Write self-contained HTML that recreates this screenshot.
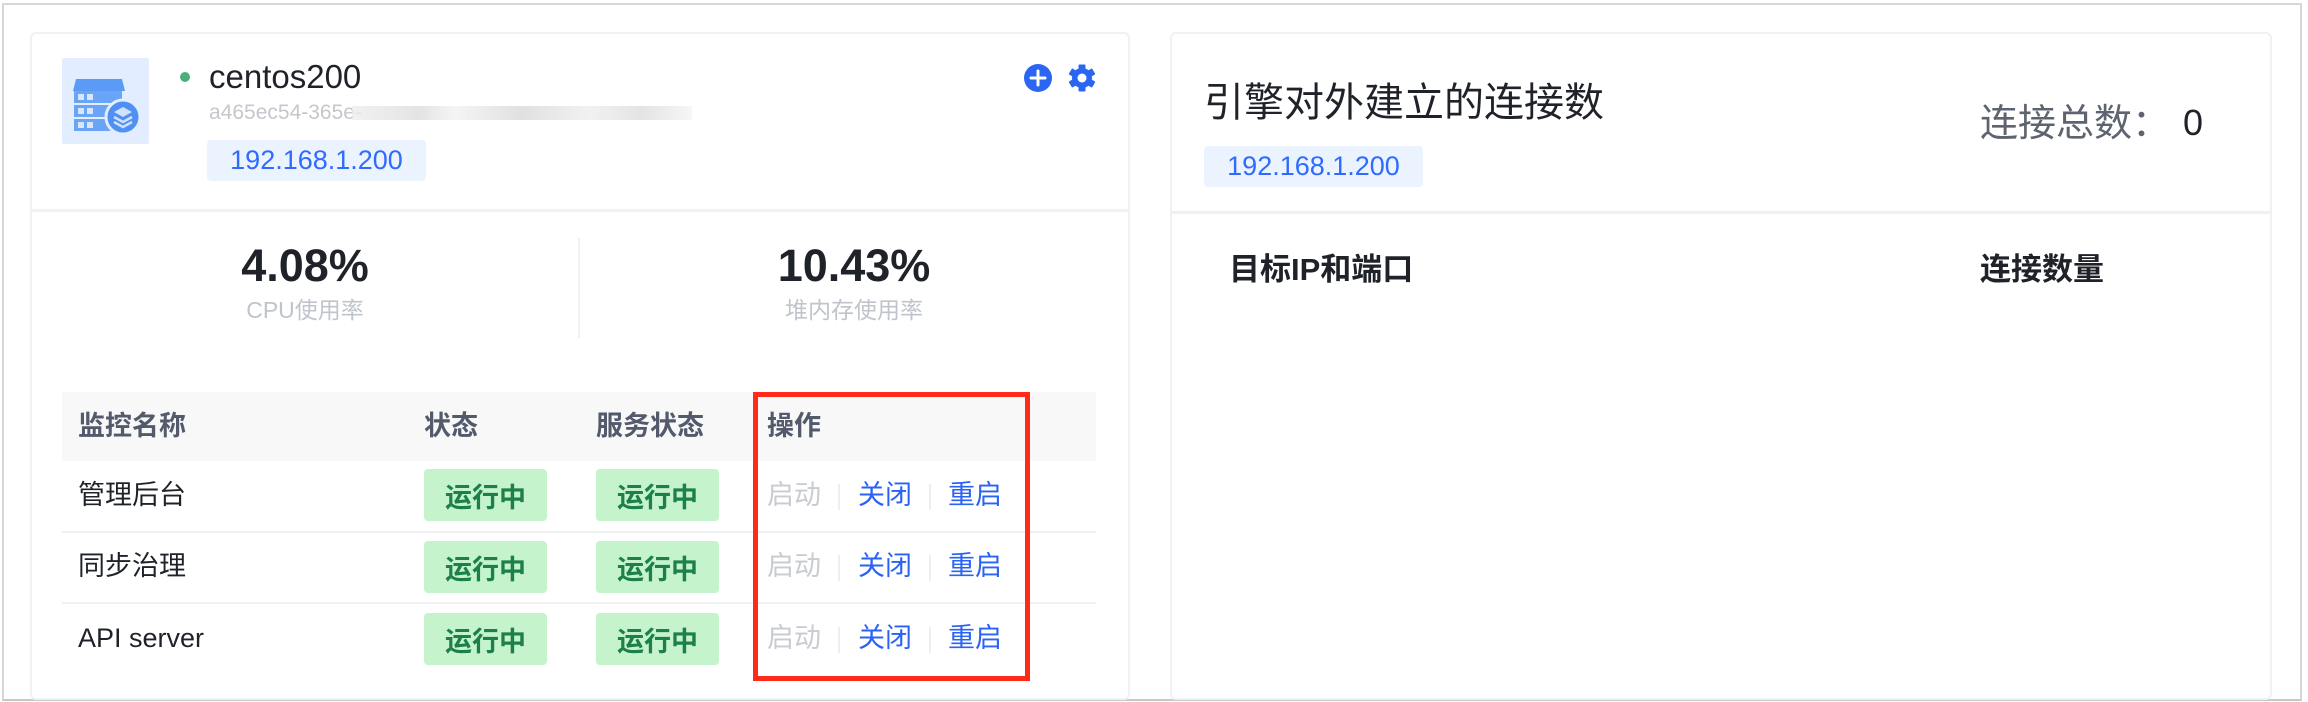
<!DOCTYPE html>
<html><head><meta charset="utf-8"><style>
*{box-sizing:border-box;margin:0;padding:0}
body{width:2308px;height:702px;background:#fff;position:relative;overflow:hidden;font-family:"Liberation Sans","Noto Sans CJK SC",sans-serif;}
.frame{position:absolute;left:2px;top:3px;width:2300px;height:698px;border:2px solid #d6d6d6;border-bottom-color:#c8c8c8;}
.card{position:absolute;border:2px solid #f0f1f3;border-radius:6px;background:#fff}
.abs{position:absolute;white-space:nowrap;line-height:1}
.tag{position:absolute;background:#ebf3ff;color:#2f6bff;border-radius:4px;font-size:27px;display:flex;align-items:center;justify-content:center}
.hdr{color:#525a6b;font-size:27px;font-weight:bold}
.badge{position:absolute;width:123px;height:52px;background:#c4f3cc;border-radius:4px;color:#1d8048;font-size:27px;font-weight:bold;display:flex;align-items:center;justify-content:center}
.op{font-size:27px}
.row{font-size:27px;color:#1f2329}
.sep{position:absolute;width:2px;height:26px;background:#eceef1}
</style></head><body>
<div class="frame"></div>
<div class="card" style="left:30px;top:32px;width:1100px;height:668px"></div>
<div class="abs" style="left:32px;top:209px;width:1096px;height:3px;background:#f0f1f3"></div>
<!-- server icon -->
<div class="abs" style="left:62px;top:58px;width:87px;height:86px;background:#e2eeff;border-radius:2px"></div>
<svg class="abs" style="left:62px;top:58px" width="87" height="86" viewBox="0 0 87 86">
<path d="M14 21h46l3 12H11z" fill="#5b9bf5"/>
<rect x="12" y="33" width="48" height="12" fill="#6aa4f7"/>
<rect x="12" y="47" width="48" height="12" fill="#6aa4f7"/>
<rect x="12" y="61" width="48" height="12" fill="#6aa4f7"/>
<g fill="#d8e6fb"><rect x="16" y="36" width="6" height="6"/><rect x="25" y="36" width="6" height="6"/><rect x="16" y="50" width="6" height="6"/><rect x="25" y="50" width="6" height="6"/><rect x="16" y="64" width="6" height="6"/><rect x="25" y="64" width="6" height="6"/></g>
<circle cx="61" cy="59" r="17" fill="#4f90f2" stroke="#e2eeff" stroke-width="3"/>
<path d="M61 49l9 5-9 5-9-5z" fill="#cfe1fb"/><path d="M52 59l9 5 9-5" stroke="#cfe1fb" stroke-width="2.5" fill="none"/><path d="M52 64l9 5 9-5" stroke="#cfe1fb" stroke-width="2.5" fill="none"/>
</svg>
<div class="abs" style="left:180px;top:72px;width:10px;height:10px;border-radius:50%;background:#4caf7a"></div>
<div class="abs" style="left:209px;top:60px;font-size:33px;color:#1f2329">centos200</div>
<div class="abs" style="left:209px;top:102px;font-size:21px;color:#c4c7cc">a465ec54-365e-</div>
<div class="abs" style="left:352px;top:106px;width:340px;height:14px;background:linear-gradient(90deg,#eee,#ddd 20%,#f2f2f2 30%,#d9d9d9 50%,#eee 70%,#ddd 85%,#f4f4f4);opacity:.8"></div>
<div class="tag" style="left:207px;top:140px;width:219px;height:41px">192.168.1.200</div>
<svg class="abs" style="left:1023px;top:63px" width="30" height="30" viewBox="0 0 30 30"><circle cx="15" cy="15" r="14" fill="#2a66f2"/><path d="M15 8v14M8 15h14" stroke="#fff" stroke-width="3" stroke-linecap="round"/></svg>
<svg class="abs" style="left:1067px;top:63px" width="30" height="30" viewBox="0 0 30 30"><g fill="#2a66f2"><circle cx="15" cy="15" r="10"/><g id="t"><rect x="11.5" y="1.5" width="7" height="7" rx="1"/></g><use href="#t" transform="rotate(60 15 15)"/><use href="#t" transform="rotate(120 15 15)"/><use href="#t" transform="rotate(180 15 15)"/><use href="#t" transform="rotate(240 15 15)"/><use href="#t" transform="rotate(300 15 15)"/></g><circle cx="15" cy="15" r="4.5" fill="#fff"/></svg>
<!-- metrics -->
<div class="abs" style="left:155px;top:243px;width:300px;text-align:center;font-size:45px;font-weight:bold;color:#1f2329">4.08%</div>
<div class="abs" style="left:155px;top:299px;width:300px;text-align:center;font-size:23px;color:#c0c4cc">CPU使用率</div>
<div class="abs" style="left:578px;top:238px;width:2px;height:100px;background:#f0f1f3"></div>
<div class="abs" style="left:704px;top:243px;width:300px;text-align:center;font-size:45px;font-weight:bold;color:#1f2329">10.43%</div>
<div class="abs" style="left:704px;top:299px;width:300px;text-align:center;font-size:23px;color:#c0c4cc">堆内存使用率</div>
<!-- table -->
<div class="abs" style="left:62px;top:392px;width:1034px;height:69px;background:#f8f8f9"></div>
<div class="abs hdr" style="left:78px;top:413px">监控名称</div>
<div class="abs hdr" style="left:424px;top:413px">状态</div>
<div class="abs hdr" style="left:596px;top:413px">服务状态</div>
<div class="abs hdr" style="left:767px;top:413px">操作</div>
<div class="abs" style="left:62px;top:531px;width:1034px;height:2px;background:#f0f1f3"></div>
<div class="abs" style="left:62px;top:602px;width:1034px;height:2px;background:#f0f1f3"></div>

<div class="abs row" style="left:78px;top:482px">管理后台</div>
<div class="abs row" style="left:78px;top:553px">同步治理</div>
<div class="abs row" style="left:78px;top:625px">API server</div>

<div class="badge" style="left:424px;top:469px">运行中</div><div class="badge" style="left:596px;top:469px">运行中</div>
<div class="badge" style="left:424px;top:541px">运行中</div><div class="badge" style="left:596px;top:541px">运行中</div>
<div class="badge" style="left:424px;top:613px">运行中</div><div class="badge" style="left:596px;top:613px">运行中</div>

<div class="abs op" style="left:767px;top:482px;color:#c8cbd0">启动</div><div class="sep" style="left:838px;top:484px"></div><div class="abs op" style="left:858px;top:482px;color:#2a62f5">关闭</div><div class="sep" style="left:929px;top:484px"></div><div class="abs op" style="left:948px;top:482px;color:#2a62f5">重启</div>
<div class="abs op" style="left:767px;top:553px;color:#c8cbd0">启动</div><div class="sep" style="left:838px;top:555px"></div><div class="abs op" style="left:858px;top:553px;color:#2a62f5">关闭</div><div class="sep" style="left:929px;top:555px"></div><div class="abs op" style="left:948px;top:553px;color:#2a62f5">重启</div>
<div class="abs op" style="left:767px;top:625px;color:#c8cbd0">启动</div><div class="sep" style="left:838px;top:627px"></div><div class="abs op" style="left:858px;top:625px;color:#2a62f5">关闭</div><div class="sep" style="left:929px;top:627px"></div><div class="abs op" style="left:948px;top:625px;color:#2a62f5">重启</div>

<div class="abs" style="left:753px;top:392px;width:277px;height:289px;border:5px solid #ff2a1a"></div>

<!-- right card -->
<div class="card" style="left:1170px;top:32px;width:1102px;height:668px"></div>
<div class="abs" style="left:1172px;top:211px;width:1098px;height:3px;background:#f0f1f3"></div>
<div class="abs" style="left:1204px;top:83px;font-size:40px;color:#1f2329">引擎对外建立的连接数</div>
<div class="tag" style="left:1204px;top:146px;width:219px;height:41px">192.168.1.200</div>
<div class="abs" style="left:1980px;top:105px;font-size:38px;color:#5d6470">连接总数：</div>
<div class="abs" style="left:2183px;top:105px;font-size:36px;color:#1f2329">0</div>
<div class="abs" style="left:1229px;top:254px;font-size:31px;font-weight:bold;color:#1f2329">目标IP和端口</div>
<div class="abs" style="left:1980px;top:254px;font-size:31px;font-weight:bold;color:#1f2329">连接数量</div>
</body></html>
